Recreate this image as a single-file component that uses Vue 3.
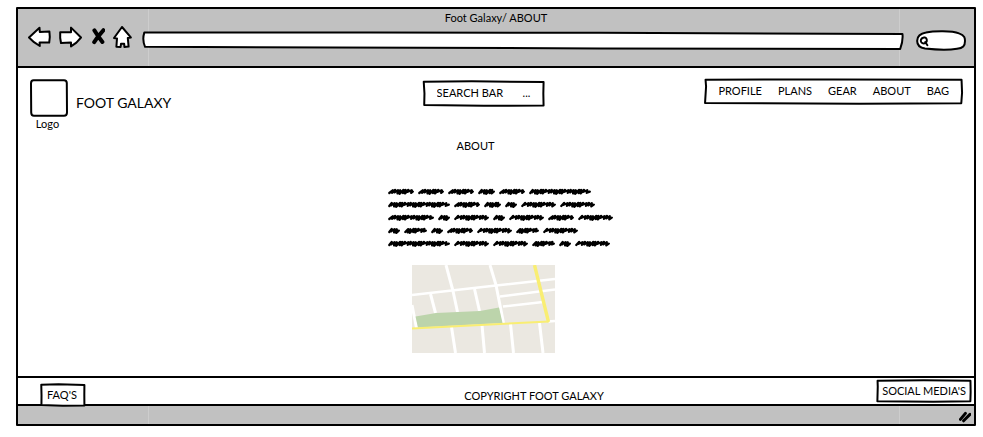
<script setup>
import { h } from 'vue'

const links = ['PROFILE', 'PLANS', 'GEAR', 'ABOUT', 'BAG']

const copyLines = [
  [26, 26, 26, 17, 26, 62],
  [62, 26, 17, 12, 35, 35],
  [46, 12, 35, 12, 35, 26, 35],
  [12, 23, 12, 26, 35, 23, 35],
  [62, 35, 35, 23, 12, 35],
]

// A scribbled word: loose loops, each with its own height and slant.
function scribble(width) {
  const loops = [[2.8, 4, 6.8], [3.4, 4.4, 7.8], [2.4, 4, 7.4], [2.9, 4.2, 8.4], [2.2, 4.4, 8.8], [3.3, 4, 8], [2, 4, 8.4]]
  let d = 'M1.3 8'
  let x = 1.3
  for (let i = width % 5; x + 4.2 < width; i++) {
    const [step, top, bottom] = loops[i % loops.length]
    d += `L${(x + step).toFixed(1)} ${(top + 0.9).toFixed(1)}L${(x + step - 0.5).toFixed(1)} ${bottom}`
    x += step
  }
  return d + `L${width - 1.2} 6.6`
}

// Hand-drawn outlines that stretch with the box they frame.
const outlines = {
  a: 'M0.6 3L40 1L99 4L98.8 50L99 98L50 99L1 96L1.2 50Z',
  b: 'M0.6 3L50 1.6L99.6 3L99.8 55L99.5 97L60 99L0.4 96.4L0.8 30Z',
}
const Frame = (props) =>
  h('svg', { class: 'frame', viewBox: '0 0 100 100', preserveAspectRatio: 'none', 'aria-hidden': 'true' }, [
    h('path', { d: outlines[props.shape], 'vector-effect': 'non-scaling-stroke' }),
  ])
Frame.props = ['shape']
</script>

<template>
  <div class="desk">
    <div class="window">
      <div class="chrome">
        <div class="title">Foot Galaxy/ ABOUT</div>
        <div class="toolbar">
          <button class="tool" type="button" aria-label="Back">
            <svg width="23" height="22" viewBox="0 0 23 22"><path d="M1 11.5L11.5 1.8L11.8 6L21.4 5.6L21.8 11L21.2 16.6L11.6 16.4L11.8 20L6 16.2Z" /></svg>
          </button>
          <button class="tool" type="button" aria-label="Forward">
            <svg width="23" height="22" viewBox="0 0 23 22"><path d="M22 11.5L12 1.6L12 6.2L1.2 6.2L1.2 12L2 17L12 16.6L12 20.4L17.4 16.6Z" /></svg>
          </button>
          <button class="tool" type="button" aria-label="Stop">
            <svg class="cross" width="15" height="22" viewBox="0 0 15 22"><path d="M4.4 4.4L8 10L12.4 16M13.4 4.2L8 10.6L4.2 16.2" /></svg>
          </button>
          <button class="tool" type="button" aria-label="Home">
            <svg width="19" height="22" viewBox="0 0 19 22"><path d="M9 1L17.8 11.4L14.8 12L15.6 20.6L11.4 21L11.2 17.8L8 17.8L7.6 21L3.4 20.8L4 12.4L1 12Z" /></svg>
          </button>
          <label class="address">
            <svg class="frame" viewBox="0 0 100 18" preserveAspectRatio="none" aria-hidden="true">
              <path vector-effect="non-scaling-stroke" d="M0.3 1.6L30 1.6L60 1.8L99.8 3Q99.9 10 99.5 18L60 17.4L25 16.4L0.4 15.8Q0 9 0.3 1.6Z" />
            </svg>
            <input type="text" aria-label="Address" />
          </label>
          <label class="finder">
            <svg width="50" height="21" viewBox="0 0 50 21" aria-hidden="true">
              <path d="M10 2.6C18 0.8 36 0.6 43 3.4C49 5.6 49 8 49 11C49 16 47 18 41 18.8C32 20.4 20 19.8 9 18.6C3.5 17.6 1 14.4 1.2 10.6C1.4 7 4 3.6 10 2.6Z" />
              <path d="M8 7.6C5 8 4 10.6 5.4 12.4C7 14.2 10.4 13.4 10.8 11C11 8.4 9.6 7.2 8 7.6M9.2 12L11.4 15.2" />
            </svg>
            <input type="search" aria-label="Search the web" />
          </label>
        </div>
      </div>

      <header class="top">
        <div class="brand">
          <figure class="logo">
            <svg width="38" height="38" viewBox="0 0 38 38" aria-hidden="true"><path d="M3.6 1.2L34 1.2Q36.8 1.2 36.8 4L37 33.6Q37 36.8 34 36.8L4 36.8Q1.2 36.8 1.2 33.6L1 4.4Q1 1.2 3.6 1.2Z" /></svg>
            <figcaption>Logo</figcaption>
          </figure>
          <span class="name">FOOT GALAXY</span>
        </div>
        <form class="search" @submit.prevent>
          <Frame shape="a" />
          <input type="text" placeholder="SEARCH BAR" aria-label="Search" />
          <button type="submit" aria-label="Search options">...</button>
        </form>
        <nav class="menu">
          <Frame shape="b" />
          <a v-for="link in links" :key="link" href="#">{{ link }}</a>
        </nav>
      </header>

      <main class="content">
        <h1>ABOUT</h1>
        <div class="copy">
          <div v-for="(line, i) in copyLines" :key="i" class="line">
            <svg v-for="(w, j) in line" :key="j" :width="w" height="13" :viewBox="`0 0 ${w} 13`"><path :d="scribble(w)" /></svg>
          </div>
        </div>
        <svg class="map" width="143" height="88" viewBox="0 0 143 88" role="img" aria-label="Map">
          <rect width="143" height="88" fill="#ebe8e1" />
          <g fill="none" stroke="#fff" stroke-width="3">
            <path d="M0 30L84 20.5L143 14" stroke-width="2.4" />
            <path d="M88 31.5L143 24.5M91 41.5L131 37M136 56.5L143 56" stroke-width="2.4" />
            <path d="M34 0L41 26L45.5 47M78 0L84 20L91.5 58" />
            <path d="M18.5 29L23.5 48M62.5 24L67.5 46" />
            <path d="M0 40L4.5 63" />
            <path d="M39.5 62L43.5 88M70 60L72.5 88M98.5 59L101.5 88M127.5 58L131 88" />
          </g>
          <path d="M3.5 51.5L24 48L68 46L87 42.5L90.5 58L6 62.5Z" fill="#bcd4ab" />
          <g fill="none" stroke="#f9ee72">
            <path d="M0 63.5L137 56.5" stroke-width="2" />
            <path d="M122.5 0L136.5 57" stroke-width="3.4" />
          </g>
        </svg>
      </main>

      <footer class="bottom">
        <a class="tab faq" href="#"><Frame shape="a" />FAQ'S</a>
        <span class="copyright">COPYRIGHT FOOT GALAXY</span>
        <a class="tab social" href="#"><Frame shape="b" />SOCIAL MEDIA'S</a>
      </footer>
      <div class="status">
        <svg width="12" height="12" viewBox="0 0 12 12" aria-hidden="true"><path d="M1.4 8.4L6.4 2.4M4.6 9.8L11 3.4" /></svg>
      </div>
    </div>
  </div>
</template>

<style>
body {
  background: #fff;
}
</style>

<style scoped>
.desk {
  display: flex;
  box-sizing: border-box;
  min-height: 100vh;
  padding: 7px 7px 11px 16px;
  font-family: Lato, "Liberation Sans", sans-serif;
  font-size: 11px;
  line-height: 14px;
  color: #000;
}

.window {
  flex: 1;
  display: flex;
  flex-direction: column;
  min-width: 0;
  border: 2px solid #000;
  border-radius: 1px;
}

svg {
  display: block;
  flex: none;
  fill: #fff;
  stroke: #000;
  stroke-width: 2;
  stroke-linejoin: round;
  stroke-linecap: round;
}

a {
  color: inherit;
  text-decoration: none;
}

button,
input {
  margin: 0;
  padding: 0;
  border: 0;
  outline: 0;
  background: none;
  font: inherit;
  color: inherit;
}

.frame,
:deep(.frame) {
  position: absolute;
  inset: 0;
  z-index: -1;
  width: 100%;
  height: 100%;
  overflow: visible;
  fill: #fff;
  stroke: #000;
  stroke-width: 2;
  stroke-linejoin: round;
}

/* Grey bars carry two faint vertical seams. */
.chrome,
.status {
  background:
    linear-gradient(#cdcdcd, #cdcdcd) left 130px top / 1px 100% no-repeat,
    linear-gradient(#cdcdcd, #cdcdcd) right 74px top / 1px 100% no-repeat,
    #c1c1c1;
}

.chrome {
  padding-bottom: 15px;
  border-bottom: 2px solid #000;
}

.title {
  padding-top: 1px;
  line-height: 16px;
  text-align: center;
}

.toolbar {
  display: flex;
  gap: 8px;
  padding: 0 8px 0 10px;
}

.tool {
  height: 22px;
}

.cross {
  stroke-width: 4;
}

.address,
.finder {
  position: relative;
  z-index: 0;
  margin-top: 4px;
}

.address {
  flex: 1;
  height: 18px;
  margin-top: 5px;
  margin-left: 2px;
  margin-right: 4px;
}

.address input {
  width: 100%;
  height: 100%;
  padding: 0 8px;
  box-sizing: border-box;
}

.finder input {
  position: absolute;
  inset: 0 8px 0 14px;
  width: 28px;
}

.top {
  display: grid;
  grid-template-columns: 1fr auto 1fr;
  align-items: start;
  padding: 11px 11px 0 12px;
}

.brand {
  display: flex;
  gap: 8px;
}

.logo {
  margin: 0;
  text-align: center;
}

.logo figcaption {
  padding-right: 3px;
}

.name {
  padding-top: 14px;
  font-size: 14px;
  line-height: 20px;
}

.search,
.menu {
  position: relative;
  z-index: 0;
  display: flex;
  align-items: center;
  box-sizing: border-box;
  height: 25px;
  padding: 0 14px 2px;
}

.search {
  margin: 2px 26px 0 0;
  gap: 8px;
}

.search input {
  width: 78px;
}

.search input::placeholder {
  color: #000;
  opacity: 1;
}

.menu {
  justify-self: end;
  gap: 16px;
}

.content {
  flex: 1;
  display: flex;
  flex-direction: column;
  align-items: center;
  padding: 7px 25px 20px 0;
}

h1 {
  margin: 0 0 31px;
  padding-right: 16px;
  font-size: 11px;
  font-weight: 400;
  line-height: 16px;
}

.copy {
  padding-left: 34px;
  margin-bottom: 15px;
}

.line {
  display: flex;
  gap: 4px;
}

.line svg {
  fill: none;
  stroke-width: 2.3;
}

.map {
  stroke: none;
  overflow: hidden;
}

.map path {
  stroke-linecap: butt;
}

.bottom {
  display: grid;
  grid-template-columns: 1fr auto 1fr;
  height: 26px;
  padding: 0 3px 0 23px;
  border-top: 2px solid #000;
  border-bottom: 2px solid #000;
}

.tab {
  position: relative;
  z-index: 0;
  box-sizing: border-box;
  height: 22px;
  padding: 0 5px;
  line-height: 21px;
}

.faq {
  justify-self: start;
  align-self: end;
  margin-bottom: -2px;
  padding: 0 8px 0 6px;
}

.social {
  justify-self: end;
  margin-top: 2px;
}

.copyright {
  align-self: center;
  margin-left: 56px;
  padding-top: 10px;
}

.status {
  display: flex;
  justify-content: flex-end;
  align-items: center;
  height: 18px;
  padding-right: 3px;
}

.status svg {
  margin-top: 3px;
  stroke-width: 3;
}
</style>
